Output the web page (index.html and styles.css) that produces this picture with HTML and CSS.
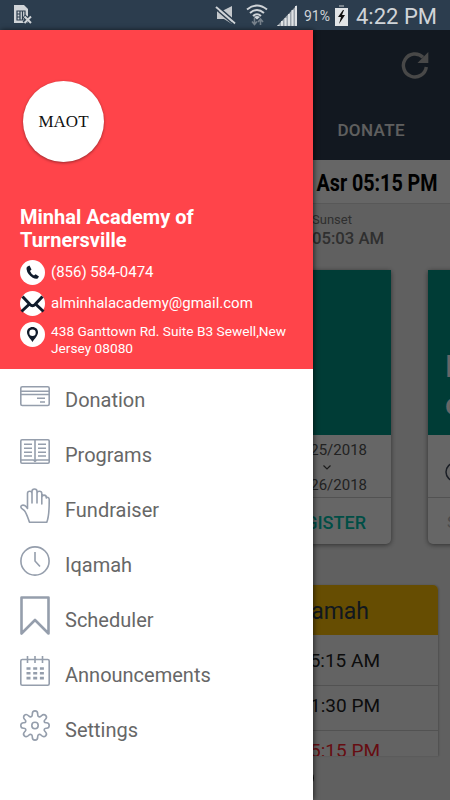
FILE: index.html
```
<!DOCTYPE html>
<html lang="en">
<head>
    <meta charset="UTF-8">
    <meta name="viewport" content="width=device-width, initial-scale=1.0">
    <title>Minhal Academy of Turnersville</title>
    <link rel="stylesheet" href="styles.css">
</head>
<body>

    <!-- Status bar -->
    <header class="status-bar">
        <svg class="sim" width="20" height="21" viewBox="0 0 20 21">
            <path d="M1 1h10l4 4v14H1z" fill="#d0d4d8"/>
            <path d="M4 7h8v9H4zM4 10h3M4 13h3M7 7v9M9.500 7v9" fill="none" stroke="#2c3d4e" stroke-width="1.200"/>
            <path d="M11 12l7 7M18 12l-7 7" stroke="#2c3d4e" stroke-width="4"/>
            <path d="M11.500 12.500l6.500 6.500M18 12.500l-6.500 6.500" stroke="#d0d4d8" stroke-width="2"/>
        </svg>
        <svg class="mute" width="22" height="20" viewBox="0 0 22 20">
            <path d="M2 6h5l10-5v18l-8-5H2z" fill="#c4c8cc"/>
            <path d="M1.500.5l19 16.500" stroke="#2c3d4e" stroke-width="2"/>
            <path d="M1 2l19 16.500" stroke="#d0d4d8" stroke-width="2"/>
            <path d="M.5 4l18 15.500" stroke="#2c3d4e" stroke-width="1.400"/>
        </svg>
        <svg class="wifi" width="22" height="22" viewBox="0 0 22 22">
            <g fill="none" stroke="#d0d4d8" stroke-width="2">
                <path d="M1 5.500Q11-2.500 21 5.500M4 9Q11 3 18 9M7 12Q11 8.500 15 12"/>
            </g>
            <path d="M11 15.500l-3-2.500q3-2 6 0z" fill="#d0d4d8"/>
            <path d="M8.500 14v6M6 17.500l2.500 3 2.500-3M14.500 21v-6M12 18l2.500-3 2.500 3" fill="none" stroke="#77818b" stroke-width="1.600"/>
        </svg>
        <svg class="signal" width="20" height="21" viewBox="0 0 20 21">
            <path d="M0 21L20 0v21z" fill="#9aa2aa"/>
            <path d="M1.500 20v1M5 16v5M8.500 13v8M12 9v12M15.500 5v16M19 1v20" stroke="#dfe2e4" stroke-width="2"/>
        </svg>
        <span class="percent">91%</span>
        <svg class="battery" width="13" height="21" viewBox="0 0 13 21">
            <path d="M4 0h5v2H4z" fill="#7b858e"/>
            <path d="M0 3h13v18H0z" fill="#e2e5e7"/>
            <path d="M8 5l-5 7h3l-2 7 6-9H7l2-5z" fill="#111"/>
        </svg>
        <span class="clock">4:22 PM</span>
    </header>

    <!-- Home screen under the drawer -->
    <main class="home">
        <div class="toolbar">
            <svg class="refresh" width="28" height="28" viewBox="0 0 28 28">
                <path d="M22 6.300A11.500 11.500 0 1 0 25.300 16" fill="none" stroke="#b4b4b4" stroke-width="3.400"/>
                <path d="M27.300 1v11H16.500z" fill="#b4b4b4"/>
            </svg>
            <span class="tab">DONATE</span>
        </div>
        <div class="next-prayer"><span>Asr 05:15 PM</span></div>
        <div class="sunset">
            <span>Sunset</span>
            <b>05:03 AM</b>
        </div>

        <div class="cards">
            <article class="card">
                <div class="cover"></div>
                <div class="dates">
                    <span>08/25/2018</span>
                    <svg width="8" height="5" viewBox="0 0 8 5"><path d="M.5.5L4 4 7.500.5" fill="none" stroke="#444" stroke-width="1.200"/></svg>
                    <span>08/26/2018</span>
                </div>
                <div class="register">REGISTER</div>
            </article>
            <article class="card">
                <div class="cover"><span>B<br>o</span></div>
                <div class="time">
                    <svg width="20" height="20" viewBox="0 0 20 20"><circle cx="10" cy="10" r="9" fill="none" stroke="#414b5c" stroke-width="1.500"/></svg>
                </div>
                <div class="share">S</div>
            </article>
        </div>

        <div class="timetable">
            <div class="head">Iqamah</div>
            <div class="row first">05:15 AM</div>
            <div class="row">01:30 PM</div>
            <div class="row now">05:15 PM</div>
        </div>
        <div class="pager"><i></i></div>
    </main>

    <div class="scrim"></div>

    <!-- Navigation drawer -->
    <aside class="drawer">
        <section class="profile">
            <div class="logo">MAOT</div>
            <h1>Minhal Academy of Turnersville</h1>
            <div class="contact phone">
                <svg width="25" height="25" viewBox="0 0 25 25">
                    <circle cx="12.500" cy="12.500" r="12.500" fill="#fff"/>
                    <path d="M7.500 6.500l2-1 2 4-1.500 1.500q1 2.800 4 4.500l1.600-1.300 3.400 2.300-1.300 2q-2 1-5-.8-5.400-3.200-6.200-8.600-.2-1.700 1-2.600z" fill="#101b2b"/>
                </svg>
                <span>(856) 584-0474</span>
            </div>
            <div class="contact email">
                <svg width="25" height="25" viewBox="0 0 25 25">
                    <circle cx="12.500" cy="12.500" r="12.500" fill="#fff"/>
                    <path d="M2.500 5.500l7.500 8q2.500 2.500 5 0l7.500-8M1.500 20.500l8.500-8M23.500 20.500l-8.500-8" fill="none" stroke="#101b2b" stroke-width="3"/>
                </svg>
                <span>alminhalacademy@gmail.com</span>
            </div>
            <div class="contact address">
                <svg width="25" height="25" viewBox="0 0 25 25">
                    <circle cx="12.500" cy="12.500" r="12.500" fill="#fff"/>
                    <path fill-rule="evenodd" d="M12.500 5c-3.300 0-5.500 2.300-5.500 5.300 0 3.400 3.500 6.600 5.500 9.700 2-3.100 5.500-6.300 5.500-9.700C18 7.300 15.800 5 12.500 5zm0 2.500a3.200 3.200 0 1 1 0 6.400 3.200 3.200 0 0 1 0-6.400z" fill="#101b2b"/>
                </svg>
                <span>438 Ganttown Rd. Suite B3 Sewell,New Jersey 08080</span>
            </div>
        </section>

        <nav class="menu">
            <a>
                <svg width="30" height="40" viewBox="0 0 30 40">
                    <rect x=".8" y="10.800" width="28.400" height="18.700" rx="1.500"/>
                    <path d="M1 15.200h28M1 18.500h28M17 22.300h8M20 26h5"/>
                </svg>
                <span>Donation</span>
            </a>
            <a>
                <svg width="30" height="40" viewBox="0 0 30 40">
                    <rect x=".8" y="8.800" width="28.400" height="23.400" rx="1.200"/>
                    <path d="M1 29h12.500l1.500 1.500 1.500-1.500H29M15 9v22M4 13.300h8M4 17.300h8M4 21.200h8M4 25h8M18 13.300h8M18 17.300h8M18 21.200h8M18 25h8"/>
                </svg>
                <span>Programs</span>
            </a>
            <a>
                <svg width="30" height="40" viewBox="0 0 30 40">
                    <path d="M9.500 36.300c-1.500-4-2.700-8.500-5-11.500-1.200-1.500-3.500-2-3.700-4 .2-2.200 3.700-2.200 5.200-.3l1.500 2V7.500c0-3 4.500-3 4.500 0V17 5.500c0-3.300 5-3.300 5 0V17 7.500c0-3 4.800-3 4.800 0V18v-6.500c0-3.200 4.500-3.200 4.500 0V12c.8-1.300 2.900-.7 2.900 1.300 0 8 .2 17-2.500 23z"/>
                </svg>
                <span>Fundraiser</span>
            </a>
            <a>
                <svg width="30" height="40" viewBox="0 0 30 40">
                    <circle cx="15" cy="20" r="14.100"/>
                    <path d="M15 11v9l5 5.500"/>
                </svg>
                <span>Iqamah</span>
            </a>
            <a>
                <svg width="30" height="40" viewBox="0 0 30 40">
                    <path d="M1.500 1.500h27v36L15 24 1.500 37.500z" stroke-width="2.600"/>
                </svg>
                <span>Scheduler</span>
            </a>
            <a>
                <svg width="30" height="40" viewBox="0 0 30 40">
                    <rect x=".8" y="8.500" width="28.400" height="25.700" rx="1.500"/>
                    <path d="M7.500 5v7M15 5v7M22.500 5v7"/>
                    <path d="M6.500 17.500h17.500M6.500 22.300h17.500M6.500 27.100h17.500" stroke-width="2.600" stroke-dasharray="4 2.700"/>
                </svg>
                <span>Announcements</span>
            </a>
            <a>
                <svg width="30" height="40" viewBox="0 0 30 40">
                    <circle cx="15" cy="19.500" r="3.200"/>
                    <path d="M12.300 8.800V8c0-4.200 5.400-4.200 5.400 0v.8c0 2 2 2.600 3.300 1.400l.5-.5c3-3 6.800.8 3.800 3.800l-.5.500c-1.200 1.200-.6 2.800 1.200 2.800h.5c3.600 0 3.600 5.400 0 5.400H26c-1.800 0-2.400 1.800-1.200 3l.5.500c3 3-.8 6.800-3.800 3.800l-.5-.5c-1.300-1.200-3.300-.6-3.300 1.400v.6c0 4.200-5.400 4.200-5.400 0v-.6c0-2-2-2.600-3.300-1.400l-.5.500c-3 3-6.800-.8-3.800-3.800l.5-.5c1.200-1.200.6-3-1.200-3h-.5c-3.600 0-3.600-5.400 0-5.400H4c1.800 0 2.400-1.600 1.200-2.800l-.5-.5c-3-3 .8-6.800 3.800-3.800l.5.500c1.300 1.200 3.300.6 3.300-1.400z"/>
                </svg>
                <span>Settings</span>
            </a>
        </nav>
    </aside>

</body>
</html>
```
FILE: styles.css
```
* {
    box-sizing: border-box;
}

body {
    font-family: Roboto, "Liberation Sans", sans-serif;
    margin: 0;
    position: relative;
    width: 450px;
    height: 800px;
    overflow: hidden;
    background-color: #f0f0f0;
}

svg {
    display: block;
    flex: none;
}

/* Status bar */
.status-bar {
    height: 30px;
    display: flex;
    align-items: flex-start;
    padding: 4px 13px 0 13px;
    background-color: #2c3d4e;
    color: #d0d4d8;
}

.mute {
    margin: 1px 0 0 auto;
}

.wifi {
    margin-left: 9px;
}

.signal {
    margin: 1px 0 0 9px;
}

.percent {
    margin: 4px 0 0 7px;
    width: 28px;
    font-size: 14px;
    line-height: 16px;
}

.battery {
    margin: 1px 0 0 3px;
}

.clock {
    margin: 0 0 0 8px;
    width: 81px;
    font-size: 22px;
    line-height: 25px;
    white-space: nowrap;
}

/* Home screen */
.home {
    height: 770px;
    overflow: hidden;
}

.toolbar {
    height: 130px;
    padding: 21px 21px 0 0;
    display: flex;
    flex-direction: column;
    align-items: flex-end;
    background-color: #2f3e50;
}

.tab {
    margin: 41px 24px 0 0;
    color: #eee;
    font-size: 17px;
    line-height: 20px;
    font-weight: 500;
    letter-spacing: 0.4px;
}

.next-prayer {
    height: 44px;
    padding: 9px 13px 0 0;
    text-align: right;
    background-color: #fff;
    border-bottom: 1px solid #dcdcdc;
    font-size: 24px;
    line-height: 28px;
    font-weight: 700;
}

.next-prayer span {
    display: inline-block;
    transform: scaleX(0.82);
    transform-origin: right;
}

.sunset {
    height: 66px;
    padding: 8px 0 0 312px;
    color: #777;
    font-size: 13px;
    line-height: 15px;
}

.sunset span,
.sunset b {
    display: block;
}

.sunset b {
    margin-top: 2px;
    font-size: 16.7px;
    line-height: 20px;
    font-weight: 500;
}

.cards {
    display: flex;
    gap: 37px;
    margin-left: 34px;
}

.card {
    flex: none;
    width: 357px;
    height: 274px;
    border-radius: 2px 2px 5px 5px;
    background-color: #fff;
    box-shadow: 0 1px 5px rgba(0, 0, 0, 0.5);
}

.cover {
    height: 165px;
    padding: 77px 0 0 17px;
    background-color: #009688;
    color: #fff;
    font-size: 32px;
    line-height: 38px;
    font-weight: 500;
}

.dates {
    height: 63px;
    padding: 6px 24px 0 0;
    display: flex;
    flex-direction: column;
    align-items: flex-end;
    border-bottom: 1px solid #ccc;
    color: #555;
    font-size: 15px;
    line-height: 19px;
}

.dates svg {
    margin: 5px 36px 6px 0;
}

.register {
    padding: 14px 25px 0 0;
    color: #00c4ae;
    text-align: right;
    font-size: 18px;
    line-height: 22px;
    font-weight: 500;
}

.time {
    height: 63px;
    padding: 27px 0 0 17px;
    border-bottom: 1px solid #ccc;
}

.share {
    padding: 13px 0 0 19px;
    color: #bbb;
    font-size: 17px;
    line-height: 22px;
}

.timetable {
    width: 404px;
    height: 171px;
    margin: 41px 0 0 34px;
    overflow: hidden;
    border-radius: 5px 5px 0 0;
    background-color: #f8f8f8;
    box-shadow: 1px 0 2px rgba(0, 0, 0, 0.2);
}

.head {
    height: 50px;
    padding: 12px 69px 0 0;
    background-color: #ffc107;
    color: #2c3d4e;
    text-align: right;
    font-size: 23px;
    line-height: 30px;
}

.row {
    height: 45px;
    padding: 8px 58px 0 0;
    border-bottom: 1px solid #ccc;
    color: #222;
    text-align: right;
    font-size: 19px;
    line-height: 23px;
}

.row.first {
    height: 51px;
    padding-top: 14px;
}

.row.now {
    color: #ff1f2d;
}

.pager {
    padding: 14px 0 0 298px;
}

.pager i {
    display: block;
    width: 16px;
    height: 16px;
    border-radius: 50%;
    background-color: #222;
}

.scrim {
    position: absolute;
    top: 30px;
    left: 0;
    right: 0;
    bottom: 0;
    background-color: rgba(0, 0, 0, 0.6);
}

/* Drawer */
.drawer {
    position: absolute;
    top: 30px;
    left: 0;
    bottom: 0;
    width: 313px;
    background-color: #fff;
    box-shadow: 1px 0 5px rgba(0, 0, 0, 0.6);
}

.profile {
    height: 339px;
    padding: 51px 20px 0 20px;
    background-color: #ff444a;
    color: #fff;
}

.logo {
    width: 81px;
    height: 81px;
    margin-left: 3px;
    border-radius: 50%;
    background-color: #fff;
    box-shadow: 0 1px 3px rgba(0, 0, 0, 0.4);
    color: #111;
    font-family: "Liberation Serif", serif;
    font-size: 17px;
    line-height: 81px;
    text-align: center;
}

.profile h1 {
    width: 200px;
    margin: 44px 0 8px;
    font-size: 20px;
    line-height: 23px;
    font-weight: 700;
}

.contact {
    display: flex;
    gap: 6px;
    height: 31px;
    font-size: 15px;
    line-height: 25px;
}

.contact.address {
    margin-right: -10px;
    font-size: 13.7px;
    line-height: 16.5px;
}

.contact.address span {
    padding-top: 1px;
}

.menu {
    padding-top: 7px;
}

.menu a {
    display: flex;
    gap: 15px;
    height: 55px;
    padding-left: 20px;
    color: #676767;
    font-size: 20px;
    line-height: 48px;
}

.menu svg {
    fill: none;
    stroke: #959eac;
    stroke-width: 1.6;
    stroke-linejoin: round;
}
```
